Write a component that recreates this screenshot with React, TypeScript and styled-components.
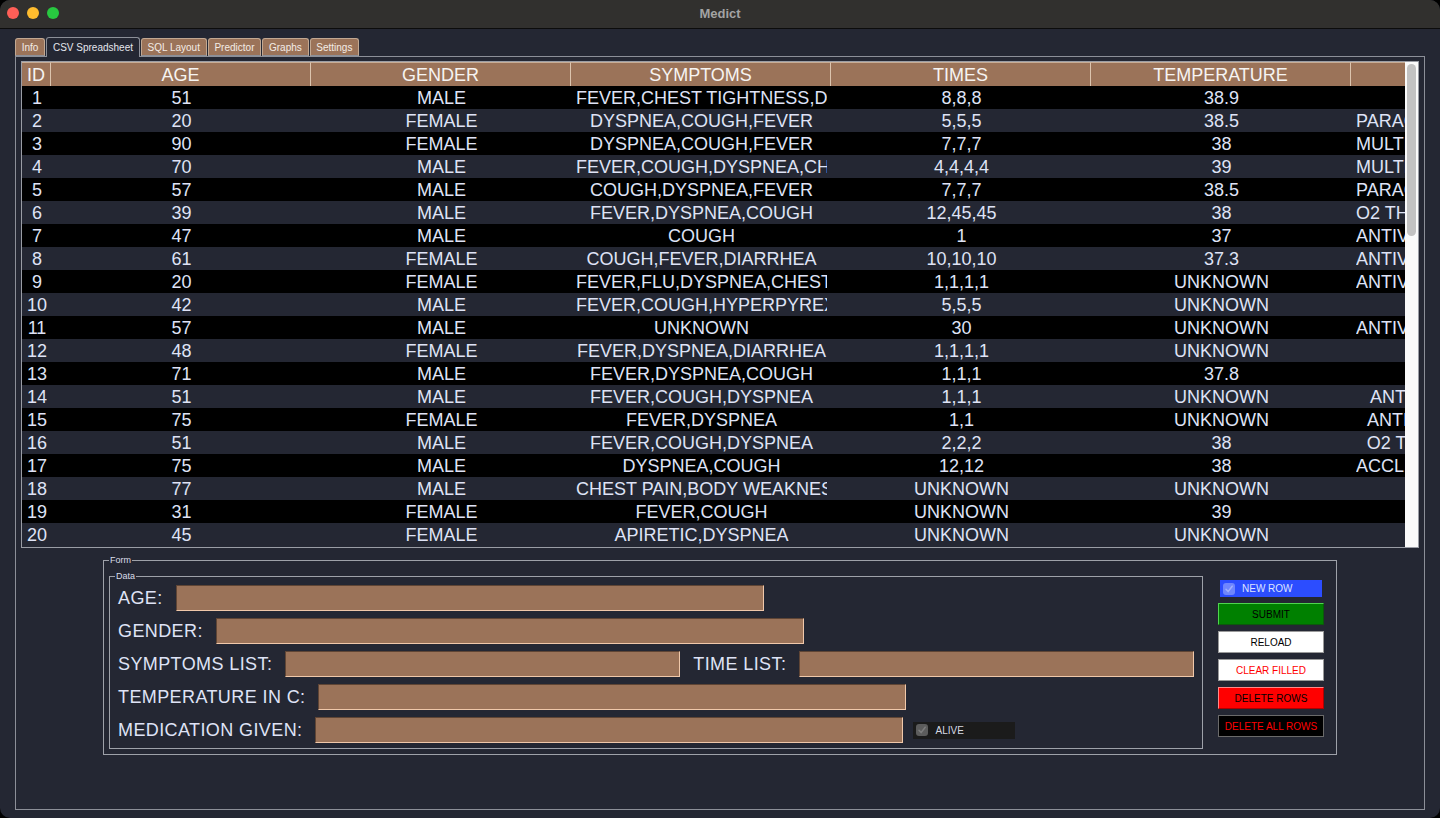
import React from 'react';
import styled, { createGlobalStyle } from 'styled-components';

const GlobalStyle = createGlobalStyle`
  html, body { margin: 0; padding: 0; background: #000; }
  body { font-family: "Liberation Sans", Arial, sans-serif; }
  * { box-sizing: border-box; }
`;

const BG = '#242733';
const BROWN = '#9b7359';
const TEXT = '#dfe3f6';

const Window = styled.div`
  width: 1440px;
  height: 818px;
  display: flex;
  flex-direction: column;
  background: ${BG};
  border-radius: 10px;
  overflow: hidden;
`;

const TitleBar = styled.div`
  flex: 0 0 29px;
  height: 29px;
  background: #31302e;
  border-bottom: 1px solid #0c0c0c;
  position: relative;
  display: flex;
  align-items: center;
  justify-content: center;
`;

const Lights = styled.div`
  position: absolute;
  left: 7px;
  top: 7px;
  display: flex;
  gap: 8px;
`;

const Light = styled.span<{ $c: string }>`
  width: 12px;
  height: 12px;
  border-radius: 50%;
  background: ${(p) => p.$c};
`;

const Title = styled.div`
  font-family: "Liberation Sans", Arial, sans-serif;
  font-weight: bold;
  font-size: 13px;
  color: #a3a3a3;
  margin-top: -1px;
`;

const Body = styled.div`
  flex: 1;
  display: flex;
  flex-direction: column;
  padding: 8px 15px 8px 15px;
  min-height: 0;
`;

const TabStrip = styled.div`
  display: flex;
  height: 19px;
  align-items: flex-start;
  position: relative;
  z-index: 2;
`;

const Tab = styled.div<{ $active?: boolean }>`
  height: ${(p) => (p.$active ? '20px' : '18px')};
  margin-top: ${(p) => (p.$active ? '0' : '1px')};
  padding: 0 5.75px;
  margin-right: 1px;
  display: flex;
  align-items: center;
  font-size: 10px;
  color: ${(p) => (p.$active ? '#e4e6ee' : '#f4ece6')};
  background: ${(p) => (p.$active ? BG : BROWN)};
  border: 1px solid ${(p) => (p.$active ? '#8c8f98' : '#c2a892')};
  border-bottom: ${(p) => (p.$active ? 'none' : '1px solid #8c8f98')};
  border-radius: 3px 3px 0 0;
  white-space: nowrap;
`;

const Pane = styled.div`
  flex: 1;
  border: 1px solid #8c8f98;
  padding: 4px 5px;
  display: flex;
  flex-direction: column;
  min-height: 0;
`;

const TableFrame = styled.div`
  height: 487px;
  border: 1px solid #9a9da5;
  display: flex;
  background: ${BG};
`;

const Viewport = styled.div`
  flex: 1;
  overflow: hidden;
`;

const Grid = styled.div`
  display: grid;
  grid-template-columns: 29px repeat(6, 260px);
  width: max-content;
`;

const HeadCell = styled.div`
  height: 24px;
  line-height: 25px;
  background: ${BROWN};
  color: #f6f4f2;
  font-size: 18px;
  text-align: center;
  border-right: 1px solid #dcc4ae;
  border-top: 1px solid #c9ae97;
  white-space: nowrap;
  overflow: hidden;
`;

const Cell = styled.div<{ $alt: boolean }>`
  height: 23px;
  overflow: hidden;
  background: ${(p) => (p.$alt ? BG : '#000')};
  padding: 1px 4px 0 5px;
`;

const CellText = styled.div`
  line-height: 23px;
  font-size: 18px;
  color: ${TEXT};
  text-align: center;
  white-space: nowrap;
  overflow: hidden;
`;

const ScrollTrack = styled.div`
  width: 13px;
  background: #fafafa;
  padding: 2px 2px 0 2px;
`;

const ScrollThumb = styled.div`
  width: 9px;
  height: 172px;
  border-radius: 5px;
  background: #c2c2c2;
`;

const Frame = styled.div`
  position: relative;
  border: 1px solid #9ea1a9;
`;

const Legend = styled.span`
  position: absolute;
  top: -6px;
  left: 5px;
  font-size: 9px;
  line-height: 11px;
  padding: 0 1px;
  color: #dadde8;
  background: ${BG};
`;

const FormFrame = styled(Frame)`
  align-self: center;
  width: 1234px;
  margin-top: 12px;
  padding: 15px 11px 5px 5px;
  display: flex;
  align-items: flex-start;
`;

const DataFrame = styled(Frame)`
  width: 1094px;
  height: 173px;
  padding: 8px 6px 4px 8px;
  display: flex;
  flex-direction: column;
  gap: 7px;
`;

const FieldRow = styled.div`
  display: flex;
  align-items: center;
  height: 26px;
`;

const Label = styled.span<{ $lead?: number }>`
  font-size: 18px;
  letter-spacing: 0.4px;
  color: ${TEXT};
  margin-right: 13px;
  margin-left: ${(p) => p.$lead ?? 0}px;
  white-space: nowrap;
`;

const Field = styled.input<{ $w: number }>`
  appearance: none;
  width: ${(p) => p.$w}px;
  height: 26px;
  padding: 0 4px;
  margin: 0;
  background: ${BROWN};
  border-top: 1px solid #5f4535;
  border-left: 1px solid #5f4535;
  border-bottom: 1px solid #f0c8aa;
  border-right: 1px solid #f0c8aa;
  outline: none;
  font-size: 18px;
  color: #fff;
`;

const CheckTag = styled.div<{ $bg: string; $fg: string }>`
  display: flex;
  align-items: center;
  gap: 7px;
  width: 102px;
  height: 17px;
  padding-left: 3px;
  background: ${(p) => p.$bg};
  font-size: 10px;
  color: ${(p) => p.$fg};
`;

const AliveTag = styled(CheckTag)`
  margin-left: 10px;
`;

const ButtonCol = styled.div`
  margin-left: 15px;
  margin-top: 4px;
  width: 106px;
  display: flex;
  flex-direction: column;
  align-items: center;
  gap: 6px;
`;

const ActionButton = styled.div<{ $bg: string; $fg: string; $hi: string; $lo: string }>`
  width: 106px;
  height: 22px;
  display: flex;
  align-items: center;
  justify-content: center;
  font-size: 10px;
  color: ${(p) => p.$fg};
  background: ${(p) => p.$bg};
  border-top: 1px solid ${(p) => p.$hi};
  border-left: 1px solid ${(p) => p.$hi};
  border-bottom: 1px solid ${(p) => p.$lo};
  border-right: 1px solid ${(p) => p.$lo};
`;

const CheckIcon = ({ box, mark }: { box: string; mark: string }) => (
  <svg width="12" height="12" viewBox="0 0 12 12">
    <rect x="0" y="0" width="12" height="12" rx="3" fill={box} />
    <path d="M3 6.3 L5.1 8.6 L9.2 3.2" stroke={mark} strokeWidth="1.5" fill="none" strokeLinecap="round" strokeLinejoin="round" />
  </svg>
);

const headers = ['ID', 'AGE', 'GENDER', 'SYMPTOMS', 'TIMES', 'TEMPERATURE', ''];

const rows: string[][] = [
  ['1', '51', 'MALE', 'FEVER,CHEST TIGHTNESS,DYSPNEA', '8,8,8', '38.9', ''],
  ['2', '20', 'FEMALE', 'DYSPNEA,COUGH,FEVER', '5,5,5', '38.5', 'PARACETAMOL,ANTIBIOTICS,OXYGEN'],
  ['3', '90', 'FEMALE', 'DYSPNEA,COUGH,FEVER', '7,7,7', '38', 'MULTIPLE ANTIBIOTICS,OXYGEN'],
  ['4', '70', 'MALE', 'FEVER,COUGH,DYSPNEA,CHEST PAIN', '4,4,4,4', '39', 'MULTIPLE ANTIBIOTICS,ANTIVIRAL'],
  ['5', '57', 'MALE', 'COUGH,DYSPNEA,FEVER', '7,7,7', '38.5', 'PARACETAMOL,ANTIVIRAL THERAPY'],
  ['6', '39', 'MALE', 'FEVER,DYSPNEA,COUGH', '12,45,45', '38', 'O2 THERAPY,ANTIBIOTICS,ANTIVIRAL'],
  ['7', '47', 'MALE', 'COUGH', '1', '37', 'ANTIVIRAL THERAPY,ANTIBIOTICS'],
  ['8', '61', 'FEMALE', 'COUGH,FEVER,DIARRHEA', '10,10,10', '37.3', 'ANTIVIRAL THERAPY,OXYGEN'],
  ['9', '20', 'FEMALE', 'FEVER,FLU,DYSPNEA,CHEST PAIN', '1,1,1,1', 'UNKNOWN', 'ANTIVIRAL,ANTIBIOTICS,OXYGEN'],
  ['10', '42', 'MALE', 'FEVER,COUGH,HYPERPYREXIA', '5,5,5', 'UNKNOWN', ''],
  ['11', '57', 'MALE', 'UNKNOWN', '30', 'UNKNOWN', 'ANTIVIRAL THERAPY,ANTIBIOTICS'],
  ['12', '48', 'FEMALE', 'FEVER,DYSPNEA,DIARRHEA', '1,1,1,1', 'UNKNOWN', ''],
  ['13', '71', 'MALE', 'FEVER,DYSPNEA,COUGH', '1,1,1', '37.8', ''],
  ['14', '51', 'MALE', 'FEVER,COUGH,DYSPNEA', '1,1,1', 'UNKNOWN', 'ANTIVIRALS,ANTIBIOTICS'],
  ['15', '75', 'FEMALE', 'FEVER,DYSPNEA', '1,1', 'UNKNOWN', 'ANTIVIRALS,ANTIPYRETIC'],
  ['16', '51', 'MALE', 'FEVER,COUGH,DYSPNEA', '2,2,2', '38', 'O2 THERAPY,ANTIBIOTICS'],
  ['17', '75', 'MALE', 'DYSPNEA,COUGH', '12,12', '38', 'ACCLIMATIZATION,O2 THERAPY'],
  ['18', '77', 'MALE', 'CHEST PAIN,BODY WEAKNESS', 'UNKNOWN', 'UNKNOWN', ''],
  ['19', '31', 'FEMALE', 'FEVER,COUGH', 'UNKNOWN', '39', ''],
  ['20', '45', 'FEMALE', 'APIRETIC,DYSPNEA', 'UNKNOWN', 'UNKNOWN', ''],
];

const tabs = ['Info', 'CSV Spreadsheet', 'SQL Layout', 'Predictor', 'Graphs', 'Settings'];

export default function App() {
  return (
    <>
      <GlobalStyle />
      <Window>
        <TitleBar>
          <Lights>
            <Light $c="#ff5f57" />
            <Light $c="#febc2e" />
            <Light $c="#28c840" />
          </Lights>
          <Title>Medict</Title>
        </TitleBar>
        <Body>
          <TabStrip>
            {tabs.map((t) => (
              <Tab key={t} $active={t === 'CSV Spreadsheet'}>
                {t}
              </Tab>
            ))}
          </TabStrip>
          <Pane>
            <TableFrame>
              <Viewport>
                <Grid>
                  {headers.map((h, i) => (
                    <HeadCell key={'h' + i}>{h}</HeadCell>
                  ))}
                  {rows.map((r, ri) =>
                    r.map((c, ci) => (
                      <Cell key={ri + '-' + ci} $alt={ri % 2 === 1}>
                        <CellText>{c}</CellText>
                      </Cell>
                    ))
                  )}
                </Grid>
              </Viewport>
              <ScrollTrack>
                <ScrollThumb />
              </ScrollTrack>
            </TableFrame>
            <FormFrame>
              <Legend>Form</Legend>
              <DataFrame>
                <Legend>Data</Legend>
                <FieldRow>
                  <Label>AGE:</Label>
                  <Field $w={588} readOnly />
                </FieldRow>
                <FieldRow>
                  <Label>GENDER:</Label>
                  <Field $w={588} readOnly />
                </FieldRow>
                <FieldRow>
                  <Label>SYMPTOMS LIST:</Label>
                  <Field $w={395} readOnly />
                  <Label $lead={13}>TIME LIST:</Label>
                  <Field $w={395} readOnly />
                </FieldRow>
                <FieldRow>
                  <Label>TEMPERATURE IN C:</Label>
                  <Field $w={588} readOnly />
                </FieldRow>
                <FieldRow>
                  <Label>MEDICATION GIVEN:</Label>
                  <Field $w={588} readOnly />
                  <AliveTag $bg="#1b1b1b" $fg="#d7d9e2">
                    <CheckIcon box="#5c5c5c" mark="#7d7d7d" />
                    ALIVE
                  </AliveTag>
                </FieldRow>
              </DataFrame>
              <ButtonCol>
                <CheckTag $bg="#2c4dff" $fg="#dfe4ff">
                  <CheckIcon box="rgba(255,255,255,0.32)" mark="rgba(200,210,255,0.55)" />
                  NEW ROW
                </CheckTag>
                <ActionButton $bg="#008000" $fg="#000" $hi="#4fd44f" $lo="#0b5a0b">SUBMIT</ActionButton>
                <ActionButton $bg="#ffffff" $fg="#000" $hi="#9a9a9a" $lo="#9a9a9a">RELOAD</ActionButton>
                <ActionButton $bg="#ffffff" $fg="#ff0000" $hi="#9a9a9a" $lo="#9a9a9a">CLEAR FILLED</ActionButton>
                <ActionButton $bg="#ff0000" $fg="#000" $hi="#ff8a8a" $lo="#b00000">DELETE ROWS</ActionButton>
                <ActionButton $bg="#000000" $fg="#ff0000" $hi="#6a6a6a" $lo="#6a6a6a">DELETE ALL ROWS</ActionButton>
              </ButtonCol>
            </FormFrame>
          </Pane>
        </Body>
      </Window>
    </>
  );
}
